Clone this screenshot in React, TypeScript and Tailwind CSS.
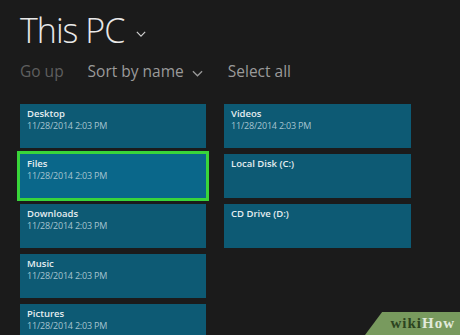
const left = [
  { name: "Desktop", date: "11/28/2014 2:03 PM" },
  { name: "Files", date: "11/28/2014 2:03 PM", selected: true },
  { name: "Downloads", date: "11/28/2014 2:03 PM" },
  { name: "Music", date: "11/28/2014 2:03 PM" },
  { name: "Pictures", date: "11/28/2014 2:03 PM" },
]

const right = [
  { name: "Videos", date: "11/28/2014 2:03 PM" },
  { name: "Local Disk (C:)" },
  { name: "CD Drive (D:)" },
]

type Item = { name: string; date?: string; selected?: boolean }

function Chevron({ className }: { className?: string }) {
  return (
    <svg className={className} viewBox="0 0 12 7" fill="none" stroke="currentColor" strokeWidth="1.4">
      <path d="M1 1l5 5 5-5" />
    </svg>
  )
}

function Tile({ item }: { item: Item }) {
  return (
    <div
      className={
        "h-[44px] shrink-0 pl-[7px] pt-[4px] " +
        (item.selected
          ? "bg-[#0a678a] outline-[3px] outline-solid outline-[#39d43a]"
          : "bg-[#0d5a74]")
      }
    >
      <div className="text-[9.5px] leading-[12px] font-semibold text-[#e4edf0]">{item.name}</div>
      {item.date && (
        <div className="text-[9px] leading-[11px] tracking-[-0.2px] text-[#a6c4d0]">{item.date}</div>
      )}
    </div>
  )
}

export default function App() {
  return (
    <div
      className="relative w-[460px] h-[335px] overflow-hidden bg-[#1b1b1b] pl-[20px]"
      style={{ fontFamily: '"Open Sans", "Noto Sans", sans-serif' }}
    >
      <div className="flex items-center pt-[8px] h-[52px]">
        <h1 className="text-[34px] leading-none font-light text-[#e8e8e8] tracking-[-1px]">This PC</h1>
        <Chevron className="ml-[12px] mt-[8px] w-[10px] h-[6px] text-[#d0d0d0]" />
      </div>

      <div className="flex items-center h-[40px] text-[15.5px] text-[#9a9a9a]">
        <span className="text-[#5f5f5f]">Go up</span>
        <span className="ml-[24px] flex items-center">
          Sort by name
          <Chevron className="ml-[8px] mt-[2px] w-[11px] h-[7px]" />
        </span>
        <span className="ml-[25px]">Select all</span>
      </div>

      <div className="mt-[12px] flex gap-[18px]">
        <div className="w-[186px] flex flex-col gap-[6px]">
          {left.map((it) => (
            <Tile key={it.name} item={it} />
          ))}
        </div>
        <div className="w-[187px] flex flex-col gap-[6px]">
          {right.map((it) => (
            <Tile key={it.name} item={it} />
          ))}
        </div>
      </div>

      <div className="absolute right-0 bottom-0 w-[95px] h-[23px] bg-[#789a5e] [clip-path:polygon(18%_0,100%_0,100%_100%,0_100%)] flex items-center justify-end pr-[5px]">
        <span
          className="text-[15px] font-bold leading-none tracking-[1px]"
          style={{ fontFamily: '"Liberation Serif", serif' }}
        >
          <span className="text-[#2c4420]">wiki</span>
          <span className="text-[#e2eadb]">How</span>
        </span>
      </div>
    </div>
  )
}
